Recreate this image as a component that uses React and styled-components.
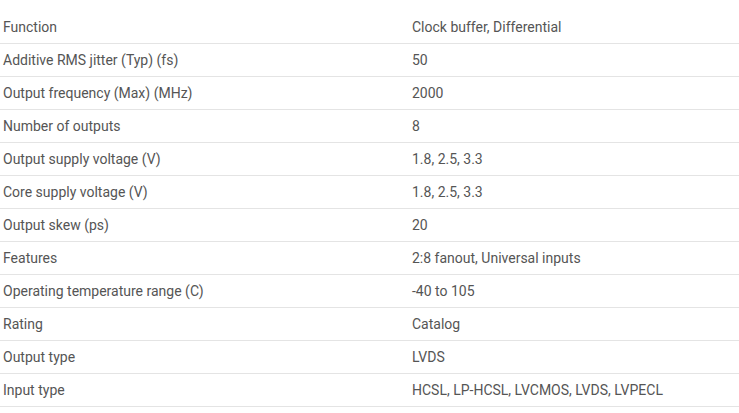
import styled, { createGlobalStyle } from "styled-components";

const rows = [
  ["Function", "Clock buffer, Differential"],
  ["Additive RMS jitter (Typ) (fs)", "50"],
  ["Output frequency (Max) (MHz)", "2000"],
  ["Number of outputs", "8"],
  ["Output supply voltage (V)", "1.8, 2.5, 3.3"],
  ["Core supply voltage (V)", "1.8, 2.5, 3.3"],
  ["Output skew (ps)", "20"],
  ["Features", "2:8 fanout, Universal inputs"],
  ["Operating temperature range (C)", "-40 to 105"],
  ["Rating", "Catalog"],
  ["Output type", "LVDS"],
  ["Input type", "HCSL, LP-HCSL, LVCMOS, LVDS, LVPECL"],
];

const GlobalStyle = createGlobalStyle`
  body {
    margin: 0;
    background: #ffffff;
    font-family: "Roboto", "Liberation Sans", sans-serif;
  }
`;

export default function App() {
  return (
    <Page>
      <GlobalStyle />
      <Table>
        {rows.map(([name, value]) => (
          <Row key={name}>
            <Cell>{name}</Cell>
            <Cell>{value}</Cell>
          </Row>
        ))}
      </Table>
    </Page>
  );
}

const Page = styled.div`
  padding-top: 11px;
  width: 739px;
`;

const Table = styled.div`
  display: flex;
  flex-direction: column;
`;

const Row = styled.div`
  display: grid;
  grid-template-columns: 409px 1fr;
  height: 32px;
  border-bottom: 1px solid #e4e4e4;
  align-items: center;
`;

const Cell = styled.div`
  padding-left: 3px;
  font-size: 14px;
  color: #555555;
  white-space: nowrap;
`;
